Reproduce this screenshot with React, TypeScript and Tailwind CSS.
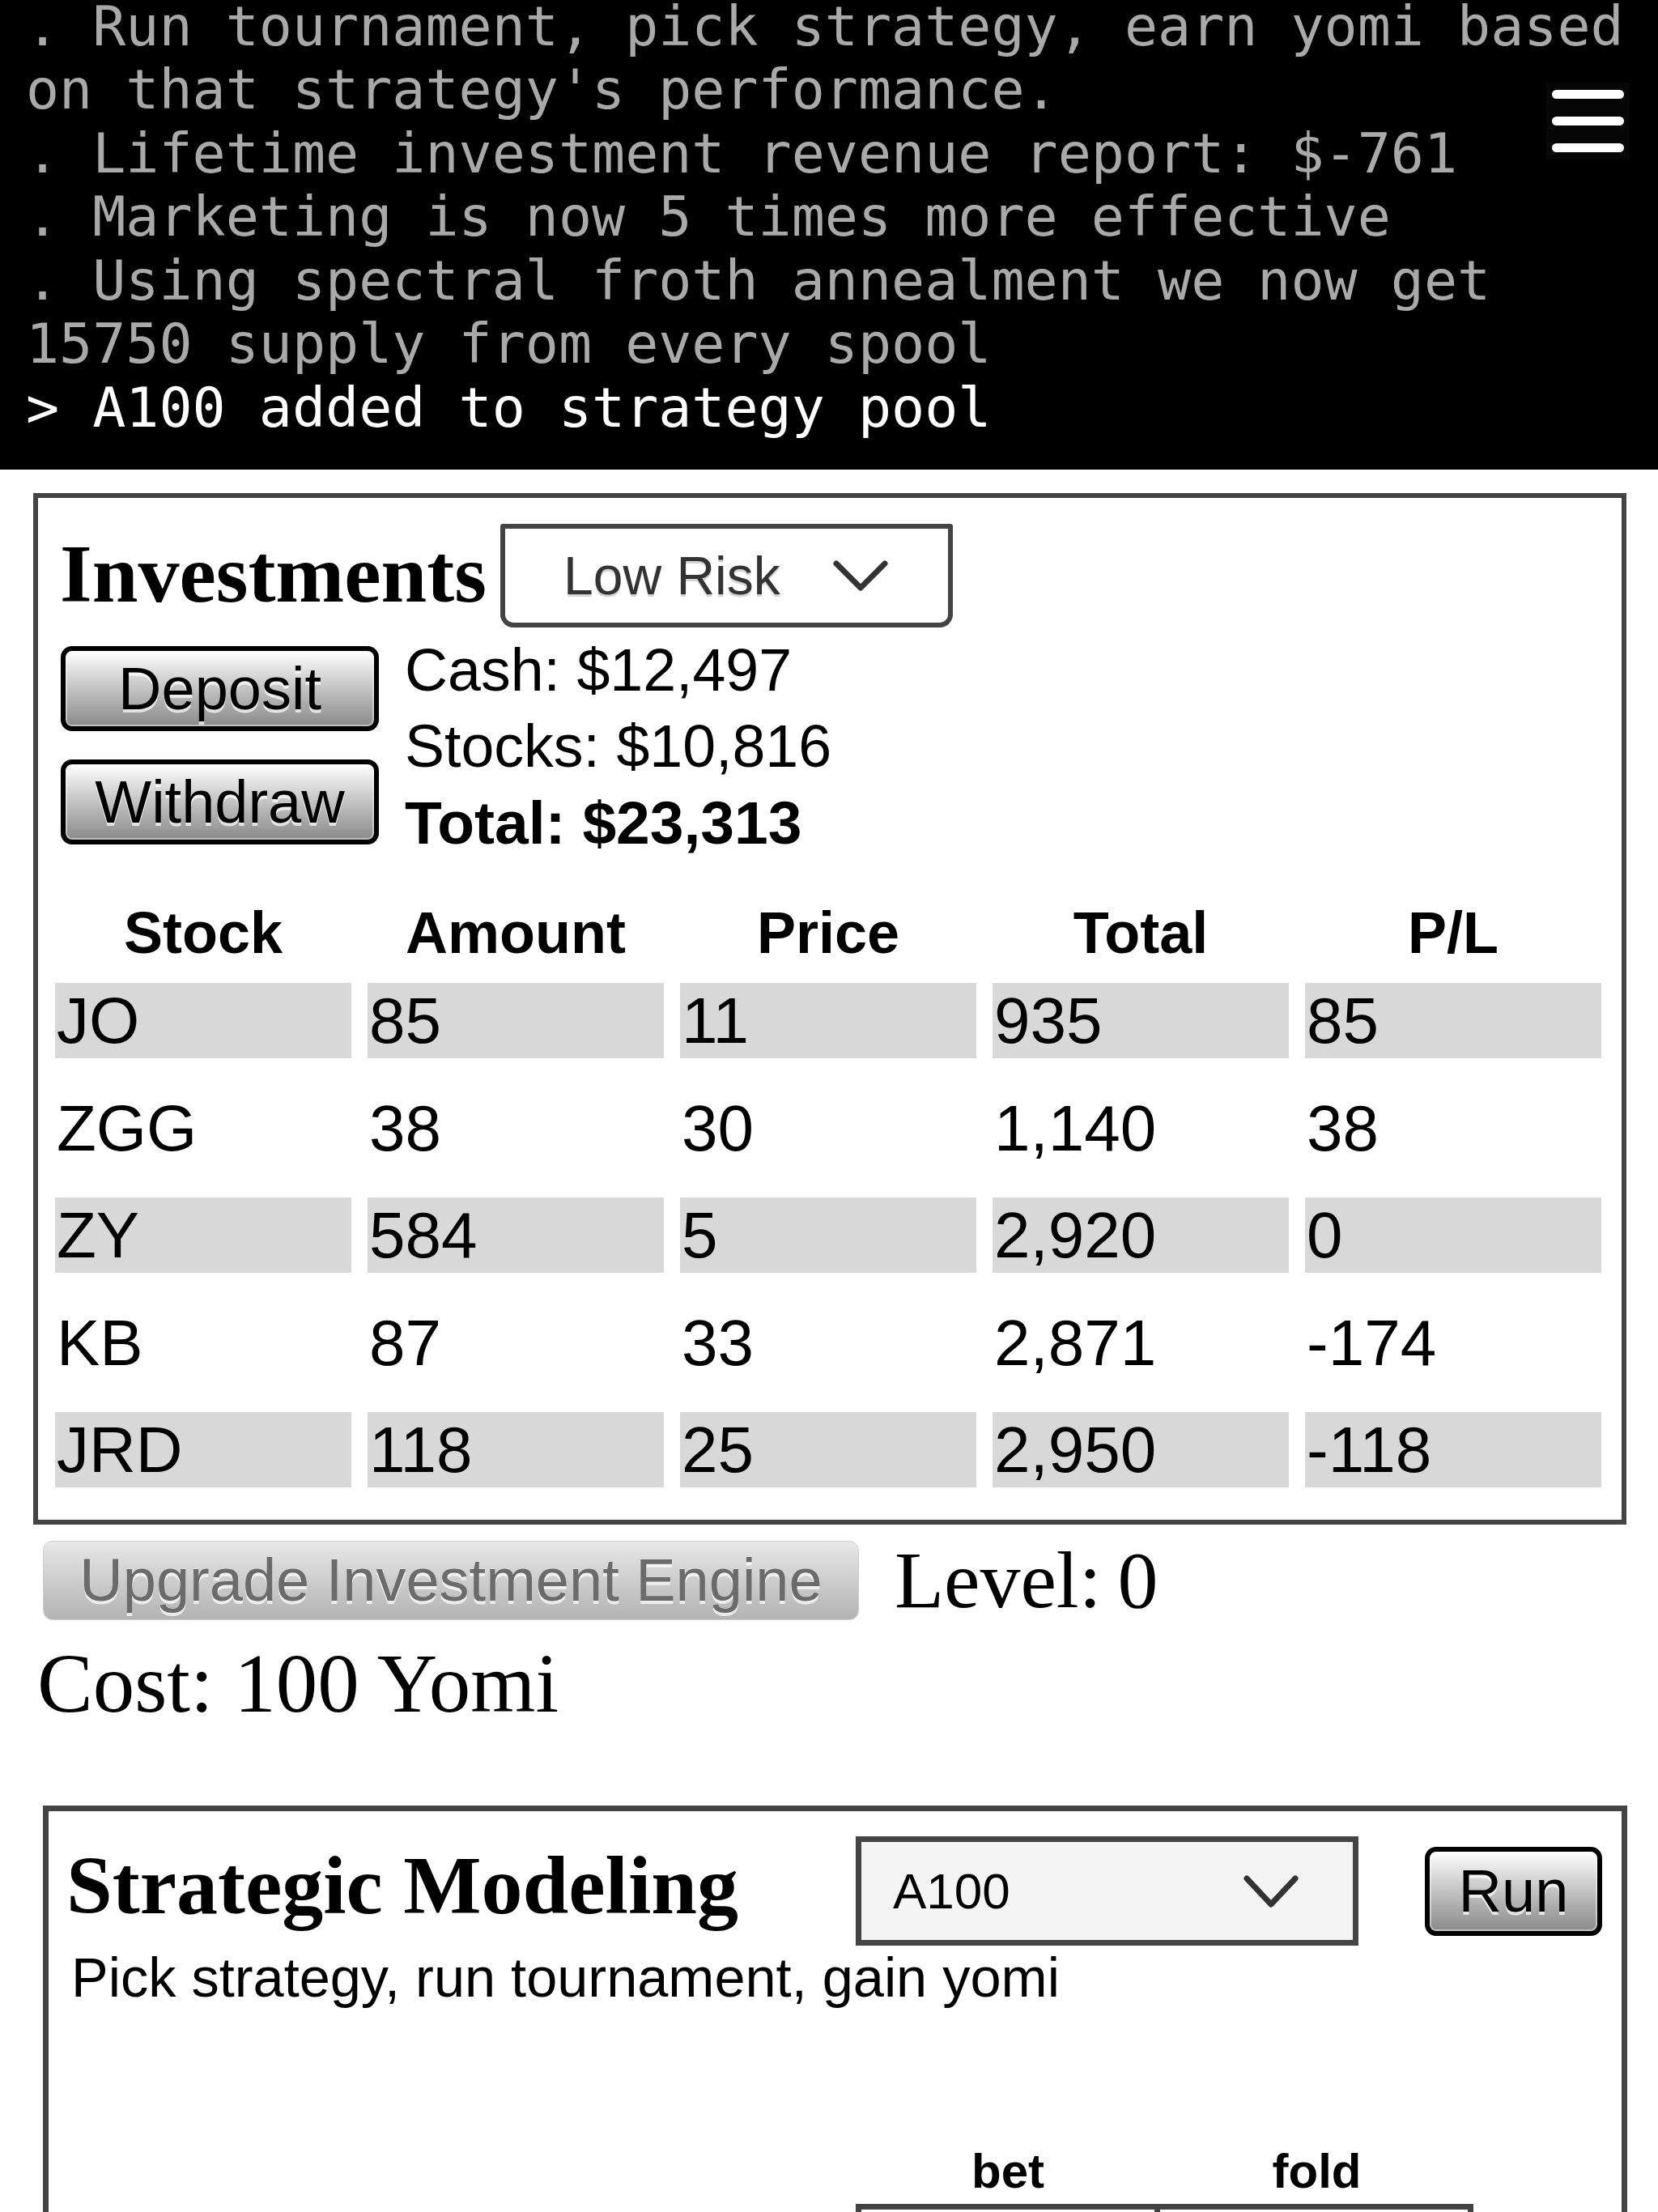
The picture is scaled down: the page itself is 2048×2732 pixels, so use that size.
import React from "react";

const consoleLines = [
  ". Run tournament, pick strategy, earn yomi based on that strategy's performance.",
  ". Lifetime investment revenue report: $-761",
  ". Marketing is now 5 times more effective",
  ". Using spectral froth annealment we now get 15750 supply from every spool",
];

const stocks = [
  ["JO", "85", "11", "935", "85"],
  ["ZGG", "38", "30", "1,140", "38"],
  ["ZY", "584", "5", "2,920", "0"],
  ["KB", "87", "33", "2,871", "-174"],
  ["JRD", "118", "25", "2,950", "-118"],
];

function Chevron({ w, h }: { w: number; h: number }) {
  return (
    <svg width={w} height={h} viewBox={`0 0 ${w} ${h}`} className="shrink-0 blur-[0.6px]">
      <polyline
        points={`5,5 ${w / 2},${h - 5} ${w - 5},5`}
        fill="none"
        stroke="#333"
        strokeWidth="7"
        strokeLinecap="round"
        strokeLinejoin="round"
      />
    </svg>
  );
}

function GlossButton({ label, className }: { label: string; className: string }) {
  return (
    <button
      className={`flex items-center justify-center rounded-[14px] border-[6px] border-black bg-gradient-to-b from-[#ffffff] to-[#8a8a8a] text-[74px] leading-none text-black shadow-[inset_0_0_0_2px_rgba(255,255,255,0.45)] [text-shadow:0_4px_0_rgba(255,255,255,0.7)] ${className}`}
    >
      {label}
    </button>
  );
}

export default function App() {
  return (
    <div className="relative h-[2732px] w-[2048px] overflow-hidden bg-white font-['Liberation_Sans',Arial,sans-serif] text-black">
      {/* Console */}
      <div className="relative flex h-[580px] flex-col justify-end overflow-hidden bg-black pb-[37px] pl-[32px] font-['DejaVu_Sans_Mono',monospace] text-[68.3px] leading-[78.5px] text-[#a9a9a9]">
        {consoleLines.map((line) => (
          <div key={line}>{line}</div>
        ))}
        <div className="text-white">&gt; A100 added to strategy pool</div>
        <div className="absolute left-[1910px] top-[102px] flex h-[95px] w-[103px] flex-col items-center justify-center gap-[22px] bg-[#060606]">
          <div className="h-[11px] w-[89px] rounded-full bg-white" />
          <div className="h-[11px] w-[89px] rounded-full bg-white" />
          <div className="h-[11px] w-[89px] rounded-full bg-white" />
        </div>
      </div>

      {/* Investments */}
      <div className="ml-[41px] mt-[29px] w-[1968px] border-[6px] border-[#444] pb-[40px]">
        <div className="flex items-start pl-[27px] pt-[32px]">
          <h2 className="w-[544px] shrink-0 whitespace-nowrap font-['Liberation_Serif',serif] text-[102px] font-bold leading-[124px]">
            Investments
          </h2>
          <div className="flex h-[128px] w-[559px] items-center rounded-b-[16px] rounded-t-[3px] border-[6px] border-[#444] bg-white pl-[72px]">
            <span className="text-[66px] text-[#333] [text-shadow:0_3px_0_#d4d4d4]">Low Risk</span>
            <span className="ml-[64px]">
              <Chevron w={70} h={40} />
            </span>
          </div>
        </div>

        <div className="flex items-start pl-[28px]">
          <div className="flex flex-col gap-[35px] pt-[23px]">
            <GlossButton label="Deposit" className="h-[105px] w-[393px]" />
            <GlossButton label="Withdraw" className="h-[105px] w-[393px]" />
          </div>
          <div className="ml-[32px] pt-[6px] text-[73.5px] leading-[94px]">
            <div>Cash: $12,497</div>
            <div>Stocks: $10,816</div>
            <div className="text-[75px] font-bold">Total: $23,313</div>
          </div>
        </div>

        <div className="mt-[49px] grid grid-cols-[repeat(5,366px)] gap-x-[20px] pl-[21px] text-center text-[72px] font-bold leading-[80px]">
          <div>Stock</div>
          <div>Amount</div>
          <div>Price</div>
          <div>Total</div>
          <div>P/L</div>
        </div>

        <div className="mt-[22px] grid grid-cols-[repeat(5,366px)] gap-x-[20px] gap-y-[39.5px] pl-[21px] text-[80px] leading-[93px]">
          {stocks.map((row, r) =>
            row.map((cell, c) => (
              <div
                key={`${r}-${c}`}
                className={`h-[93px] pl-[2px] ${r % 2 === 0 ? "bg-[#d8d8d8]" : ""}`}
              >
                {cell}
              </div>
            ))
          )}
        </div>
      </div>

      {/* Upgrade */}
      <div className="ml-[53px] mt-[20px] flex items-start">
        <button className="flex h-[98px] w-[1008px] items-center justify-center rounded-[12px] border border-[#cfcfcf] bg-gradient-to-b from-[#e8e8e8] to-[#b3b3b3] text-[74px] leading-none text-[#6b6b6b] [text-shadow:0_4px_0_rgba(255,255,255,0.7)]">
          Upgrade Investment Engine
        </button>
        <div className="ml-[44px] font-['Liberation_Serif',serif] text-[100px] leading-[98px]">
          Level:&#8201;0
        </div>
      </div>
      <div className="mt-[18px] pl-[46px] font-['Liberation_Serif',serif] text-[103px] leading-[120px]">
        Cost: 100 Yomi
      </div>

      {/* Strategic Modeling */}
      <div className="ml-[53px] mt-[91px] h-[800px] w-[1957px] border-[7px] border-[#444]">
        <div className="flex items-start pl-[22px] pt-[31px]">
          <h2 className="w-[975px] shrink-0 whitespace-nowrap font-['Liberation_Serif',serif] text-[102px] font-bold leading-[121px]">
            Strategic Modeling
          </h2>
          <div className="flex h-[135px] w-[621px] items-center justify-between border-[7px] border-[#444] bg-[#f4f4f4] pl-[39px] pr-[66px]">
            <span className="text-[62px]">A100</span>
            <Chevron w={70} h={42} />
          </div>
          <GlossButton label="Run" className="ml-[82px] mt-[13px] h-[110px] w-[219px]" />
        </div>
        <div className="pl-[28px] text-[68.5px] leading-[80px]">
          Pick strategy, run tournament, gain yomi
        </div>
        <div className="ml-[997px] mt-[164px] w-[763px]">
          <div className="grid grid-cols-[376px_387px] text-center text-[60px] font-bold leading-[70px]">
            <div>bet</div>
            <div>fold</div>
          </div>
          <div className="mt-[5px] flex">
            <div className="h-[200px] w-[376px] border-[7px] border-[#444]" />
            <div className="h-[200px] w-[387px] border-[7px] border-l-0 border-[#444]" />
          </div>
        </div>
      </div>
    </div>
  );
}
